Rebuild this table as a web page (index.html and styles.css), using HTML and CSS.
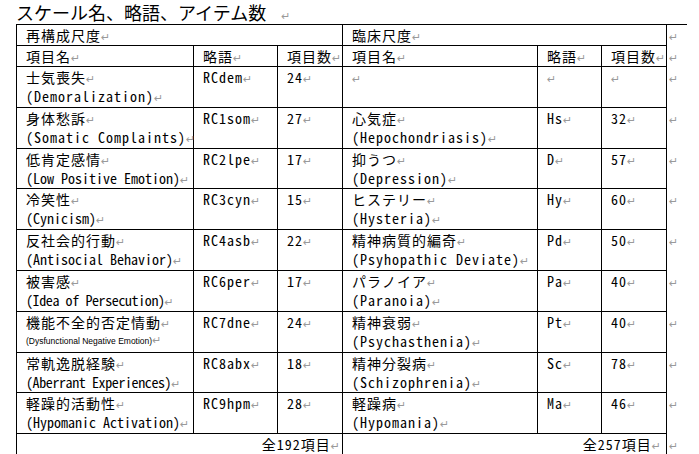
FILE: index.html
```html
<!DOCTYPE html>
<html lang="ja">
<head>
<meta charset="utf-8">
<title>スケール名、略語、アイテム数</title>
<link rel="stylesheet" href="styles.css">
</head>
<body>
<h1 class="title">スケール名、略語、アイテム数<span class="pm">↵</span></h1>
<div class="tables">
  <table class="tbl left">
    <colgroup><col class="c1"><col class="c2"><col class="c3"></colgroup>
    <tr class="h1"><td colspan="3">再構成尺度<span class="pm">↵</span></td></tr>
    <tr class="h2"><td>項目名<span class="pm">↵</span></td><td>略語<span class="pm">↵</span></td><td>項目数<span class="pm">↵</span></td></tr>
    <tr class="d"><td><div>士気喪失<span class="pm">↵</span></div><div>(Demoralization)<span class="pm">↵</span></div></td><td>RCdem<span class="pm">↵</span></td><td>24<span class="pm">↵</span></td></tr>
    <tr class="d"><td><div>身体愁訴<span class="pm">↵</span></div><div>(Somatic Complaints)<span class="pm">↵</span></div></td><td>RC1som<span class="pm">↵</span></td><td>27<span class="pm">↵</span></td></tr>
    <tr class="d"><td><div>低肯定感情<span class="pm">↵</span></div><div class="tight">(Low Positive Emotion)<span class="pm">↵</span></div></td><td>RC2lpe<span class="pm">↵</span></td><td>17<span class="pm">↵</span></td></tr>
    <tr class="d"><td><div>冷笑性<span class="pm">↵</span></div><div class="tight">(Cynicism)<span class="pm">↵</span></div></td><td>RC3cyn<span class="pm">↵</span></td><td>15<span class="pm">↵</span></td></tr>
    <tr class="d"><td><div>反社会的行動<span class="pm">↵</span></div><div class="tight">(Antisocial Behavior)<span class="pm">↵</span></div></td><td>RC4asb<span class="pm">↵</span></td><td>22<span class="pm">↵</span></td></tr>
    <tr class="d"><td><div>被害感<span class="pm">↵</span></div><div class="tighter">(Idea of Persecution)<span class="pm">↵</span></div></td><td>RC6per<span class="pm">↵</span></td><td>17<span class="pm">↵</span></td></tr>
    <tr class="d"><td><div>機能不全的否定情動<span class="pm">↵</span></div><div class="small">(Dysfunctional Negative Emotion)<span class="pm">↵</span></div></td><td>RC7dne<span class="pm">↵</span></td><td>24<span class="pm">↵</span></td></tr>
    <tr class="d"><td><div>常軌逸脱経験<span class="pm">↵</span></div><div class="tighter">(Aberrant Experiences)<span class="pm">↵</span></div></td><td>RC8abx<span class="pm">↵</span></td><td>18<span class="pm">↵</span></td></tr>
    <tr class="d"><td><div>軽躁的活動性<span class="pm">↵</span></div><div class="tight">(Hypomanic Activation)<span class="pm">↵</span></div></td><td>RC9hpm<span class="pm">↵</span></td><td>28<span class="pm">↵</span></td></tr>
    <tr class="t"><td colspan="3" class="total">全192項目<span class="pm">↵</span></td></tr>
  </table>
  <table class="tbl right">
    <colgroup><col class="c1"><col class="c2"><col class="c3"><col class="c4"></colgroup>
    <tr class="h1"><td colspan="3">臨床尺度<span class="pm">↵</span></td><td class="eor"><span class="pm">↵</span></td></tr>
    <tr class="h2"><td>項目名<span class="pm">↵</span></td><td>略語<span class="pm">↵</span></td><td>項目数<span class="pm">↵</span></td><td class="eor"><span class="pm">↵</span></td></tr>
    <tr class="d"><td><span class="pm">↵</span></td><td><span class="pm">↵</span></td><td><span class="pm">↵</span></td><td class="eor"><span class="pm">↵</span></td></tr>
    <tr class="d"><td><div>心気症<span class="pm">↵</span></div><div>(Hepochondriasis)<span class="pm">↵</span></div></td><td>Hs<span class="pm">↵</span></td><td>32<span class="pm">↵</span></td><td class="eor"><span class="pm">↵</span></td></tr>
    <tr class="d"><td><div>抑うつ<span class="pm">↵</span></div><div>(Depression)<span class="pm">↵</span></div></td><td>D<span class="pm">↵</span></td><td>57<span class="pm">↵</span></td><td class="eor"><span class="pm">↵</span></td></tr>
    <tr class="d"><td><div>ヒステリー<span class="pm">↵</span></div><div>(Hysteria)<span class="pm">↵</span></div></td><td>Hy<span class="pm">↵</span></td><td>60<span class="pm">↵</span></td><td class="eor"><span class="pm">↵</span></td></tr>
    <tr class="d"><td><div>精神病質的編奇<span class="pm">↵</span></div><div>(Psyhopathic Deviate)<span class="pm">↵</span></div></td><td>Pd<span class="pm">↵</span></td><td>50<span class="pm">↵</span></td><td class="eor"><span class="pm">↵</span></td></tr>
    <tr class="d"><td><div>パラノイア<span class="pm">↵</span></div><div>(Paranoia)<span class="pm">↵</span></div></td><td>Pa<span class="pm">↵</span></td><td>40<span class="pm">↵</span></td><td class="eor"><span class="pm">↵</span></td></tr>
    <tr class="d"><td><div>精神衰弱<span class="pm">↵</span></div><div>(Psychasthenia)<span class="pm">↵</span></div></td><td>Pt<span class="pm">↵</span></td><td>40<span class="pm">↵</span></td><td class="eor"><span class="pm">↵</span></td></tr>
    <tr class="d"><td><div>精神分裂病<span class="pm">↵</span></div><div>(Schizophrenia)<span class="pm">↵</span></div></td><td>Sc<span class="pm">↵</span></td><td>78<span class="pm">↵</span></td><td class="eor"><span class="pm">↵</span></td></tr>
    <tr class="d"><td><div>軽躁病<span class="pm">↵</span></div><div>(Hypomania)<span class="pm">↵</span></div></td><td>Ma<span class="pm">↵</span></td><td>46<span class="pm">↵</span></td><td class="eor"><span class="pm">↵</span></td></tr>
    <tr class="t"><td colspan="3" class="total">全257項目<span class="pm">↵</span></td><td class="eor"><span class="pm">↵</span></td></tr>
  </table>
</div>
</body>
</html>
```
FILE: styles.css
```css
html, body {
  margin: 0;
  padding: 0;
  background: #fff;
}
body {
  padding-left: 16px;
  color: #000;
  font-family: "Noto Sans Mono CJK JP", "Noto Sans CJK JP", "DejaVu Sans Mono", monospace;
}
.title {
  margin: 0;
  height: 24px;
  font-family: "Noto Sans CJK JP", sans-serif;
  font-size: 18px;
  line-height: 24px;
  font-weight: normal;
  white-space: nowrap;
}
.title .pm {
  margin-left: 15px;
}
.pm {
  font-family: "DejaVu Sans", sans-serif;
  font-size: 11px;
  line-height: 0;
  letter-spacing: 0;
  color: #9a9a9a;
  margin-left: 0;
}
.tables {
  display: flex;
  align-items: flex-start;
}
.tbl {
  border-collapse: separate;
  border-spacing: 0;
  table-layout: fixed;
  font-size: 14px;
  letter-spacing: 1px;
  line-height: 19px;
}
.tbl td {
  border-right: 1px solid #000;
  border-bottom: 1px solid #000;
  padding: 1px 0 0 9px;
  vertical-align: top;
  white-space: nowrap;
  overflow: visible;
}
.tbl tr:first-child td {
  border-top: 1px solid #000;
}
.left td:first-child {
  border-left: 1px solid #000;
}
.left { width: 327px; }
.left .c1 { width: 178px; }
.left .c2 { width: 84px; }
.left .c3 { width: 65px; }
.right { width: 344px; }
.right .c1 { width: 195px; }
.right .c2 { width: 64px; }
.right .c3 { width: 65px; }
.right .c4 { width: 20px; }
.tbl td.eor {
  border: none;
  padding-left: 2px;
}
.h1 { height: 22px; }
.h2 { height: 21px; }
.d { height: 40.8px; }
.t { height: 21px; }
.tbl td.total {
  text-align: right;
  padding-right: 2px;
}
.right td.total {
  padding-right: 5px;
}
.tight {
  letter-spacing: 0;
}
.tighter {
  letter-spacing: -0.4px;
}
.small {
  font-family: "Liberation Sans", sans-serif;
  font-size: 8.5px;
  letter-spacing: 0;
  line-height: 14px;
  padding-top: 2px;
}
```
